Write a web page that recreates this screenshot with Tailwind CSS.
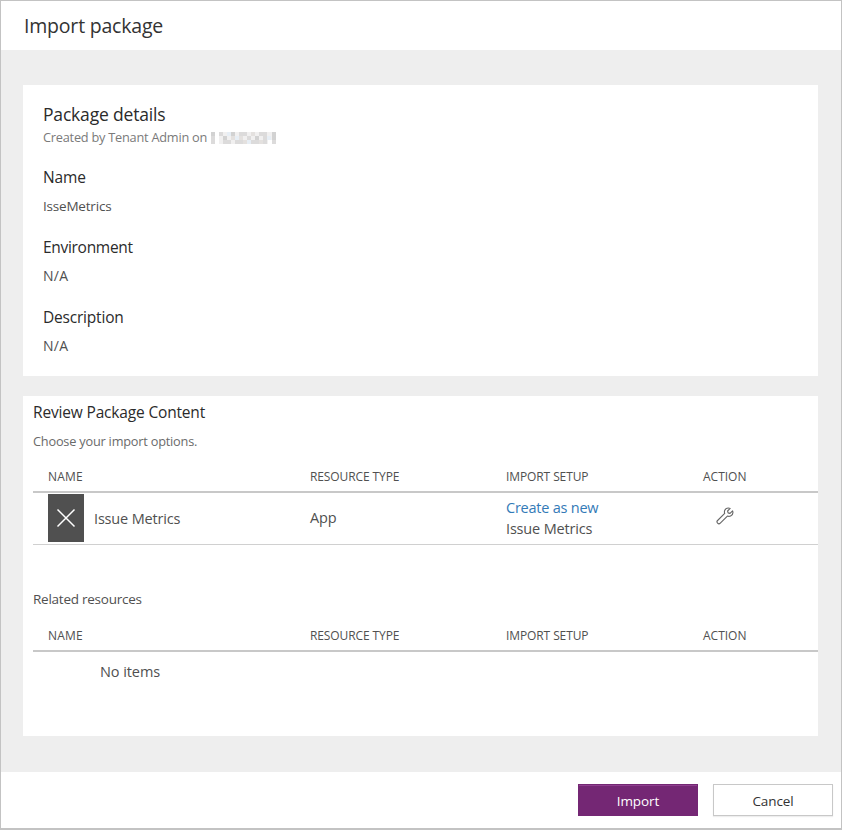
<!DOCTYPE html>
<html lang="en">
<head>
<meta charset="utf-8">
<title>Import package</title>
<script src="https://cdn.jsdelivr.net/npm/@tailwindcss/browser@4"></script>
</head>
<body class="bg-white font-['Open_Sans','Noto_Sans',sans-serif] text-[#505050]">
<div class="flex h-[830px] w-[842px] flex-col border border-b-2 border-[#c3c3c3]">
  <header class="flex h-[49px] shrink-0 items-center bg-white pl-[23px]">
    <h1 class="text-[19.5px] leading-7 tracking-[-0.2px] text-[#333]">Import package</h1>
  </header>

  <main class="flex grow flex-col gap-5 bg-[#eeeeee] pt-[35px] pr-[23px] pl-[22px]">
    <section class="h-[291px] bg-white px-5 pt-4">
      <h2 class="text-[17.5px] leading-[26px] tracking-[-0.18px] text-[#2b2b2b]">Package details</h2>
      <div class="mt-px flex h-[18px] items-center gap-1 text-[12.75px] leading-[18px] tracking-[-0.23px] text-[#7a7a7a]">
        <span>Created by Tenant Admin on</span>
        <svg class="mt-px h-3 w-[66px]" viewBox="0 0 66 12" shape-rendering="crispEdges" aria-hidden="true">
          <path fill="#f1f0f0" d="M0 0h66v12H0z"/>
          <path fill="#d2d2d2" d="M0 0h4v4H0zM12 4h4v4h-4zM20 0h4v4h-4zM44 4h4v4h-4zM61 0h4v8h-4z"/>
          <path fill="#dcdbdb" d="M0 4h4v8H0zM8 0h4v4H8zM12 8h8v4h-8zM24 8h8v4h-8zM28 0h8v4h-8zM36 4h4v4h-4zM40 8h8v4h-8zM48 0h8v4h-8zM52 4h4v8h-4zM61 8h4v4h-4z"/>
          <path fill="#e4e1df" d="M20 4h4v4h-4zM28 4h4v4h-4zM40 0h4v4h-4zM48 8h4v4h-4zM32 8h4v4h-4z"/>
          <path fill="#e7eef5" d="M16 0h4v4h-4zM24 4h4v4h-4zM36 8h4v4h-4zM56 4h4v4h-4z"/>
          <path fill="#fff" d="M4 0h4v12H4zM57 8h4v4h-4zM65 0h1v12h-1z"/>
        </svg>
      </div>
      <dl class="mt-5">
        <dt class="text-[15.5px] leading-[22px] tracking-[-0.15px] text-[#2b2b2b]">Name</dt>
        <dd class="mt-[7px] mb-[19px] text-[13.5px] leading-[22px] tracking-[-0.2px]">IsseMetrics</dd>
        <dt class="text-[15.5px] leading-[22px] tracking-[-0.3px] text-[#2b2b2b]">Environment</dt>
        <dd class="mt-[7px] mb-[19px] text-[14px] leading-[22px] tracking-[0.3px]">N/A</dd>
        <dt class="text-[15.5px] leading-[22px] tracking-[-0.2px] text-[#2b2b2b]">Description</dt>
        <dd class="mt-[7px] text-[14px] leading-[22px] tracking-[0.3px]">N/A</dd>
      </dl>
    </section>

    <section class="h-[340px] bg-white pt-[5px] pl-2.5">
      <h2 class="text-[15.5px] leading-[22px] tracking-[-0.17px] text-[#2b2b2b]">Review Package Content</h2>
      <p class="mt-2 text-[12.75px] leading-5 tracking-[-0.21px] text-[#6a6a6a]">Choose your import options.</p>

      <div class="mt-[10px] grid h-[32px] grid-cols-[262px_196px_196px_1fr] border-b-2 border-[#c8c8c8] pt-[7px] pl-[15px] text-[12px] leading-[18px] tracking-[-0.1px]">
        <span class="tracking-[0.2px]">NAME</span><span>RESOURCE TYPE</span><span>IMPORT SETUP</span><span class="pl-px tracking-[0px]">ACTION</span>
      </div>
      <div class="grid h-[52px] grid-cols-[262px_196px_196px_1fr] items-center border-b border-[#d0d0d0] pb-0.5 pl-[15px] text-[14.5px] leading-[21px] tracking-[-0.17px]">
        <div class="flex items-center gap-2.5">
          <span class="flex h-12 w-9 items-center justify-center bg-[#505050]">
            <svg class="size-5" viewBox="0 0 20 20" fill="none" stroke="#fff" stroke-width="1.5"><path d="M1.500 1.500l17 17M18.500 1.500l-17 17"/></svg>
          </span>
          <span class="pt-px">Issue Metrics</span>
        </div>
        <span>App</span>
        <div class="flex flex-col"><span class="tracking-[-0.23px] text-[#337ab7]">Create as new</span><span>Issue Metrics</span></div>
        <svg class="mb-1 ml-[14px] size-[18px]" viewBox="0 0 18 18" fill="none" stroke="#666" stroke-width="1.1" stroke-linejoin="round"><path d="M14.2 1.4 11.600 4l.5 1.900 1.900.5 2.600-2.600c.7 2.100-.1 4.300-2 5.200-1.100.5-2.200.5-3.200.1l-7.100 7.100a1.900 1.900 0 0 1-2.700-2.700L8.700 6.400c-.4-1-.4-2.100.1-3.200.9-1.900 3.300-2.700 5.400-1.800z"/></svg>
      </div>

      <h3 class="mt-[44px] text-[13.5px] leading-5 tracking-[-0.25px]">Related resources</h3>
      <div class="mt-[11px] grid h-[32px] grid-cols-[262px_196px_196px_1fr] border-b-2 border-[#c8c8c8] pt-[7px] pl-[15px] text-[12px] leading-[18px] tracking-[-0.1px]">
        <span class="tracking-[0.2px]">NAME</span><span>RESOURCE TYPE</span><span>IMPORT SETUP</span><span class="pl-px tracking-[0px]">ACTION</span>
      </div>
      <p class="mt-[9px] pl-[67px] text-[14.5px] leading-[21px] tracking-[-0.08px]">No items</p>
    </section>
  </main>

  <footer class="flex h-[56px] shrink-0 justify-end gap-[15px] bg-white pt-3 pr-2">
    <button class="h-8 w-[120px] border border-[#742774] bg-[#742774] pt-0.5 text-[13.5px] tracking-[-0.1px] text-white shadow-[inset_0_1px_0_#8f3f8f]">Import</button>
    <button class="h-8 w-[120px] border border-[#c8c8c8] bg-white pt-0.5 text-[13.5px] tracking-[-0.1px] text-[#333] shadow-[0_1px_1px_#eee]">Cancel</button>
  </footer>
</div>
</body>
</html>
